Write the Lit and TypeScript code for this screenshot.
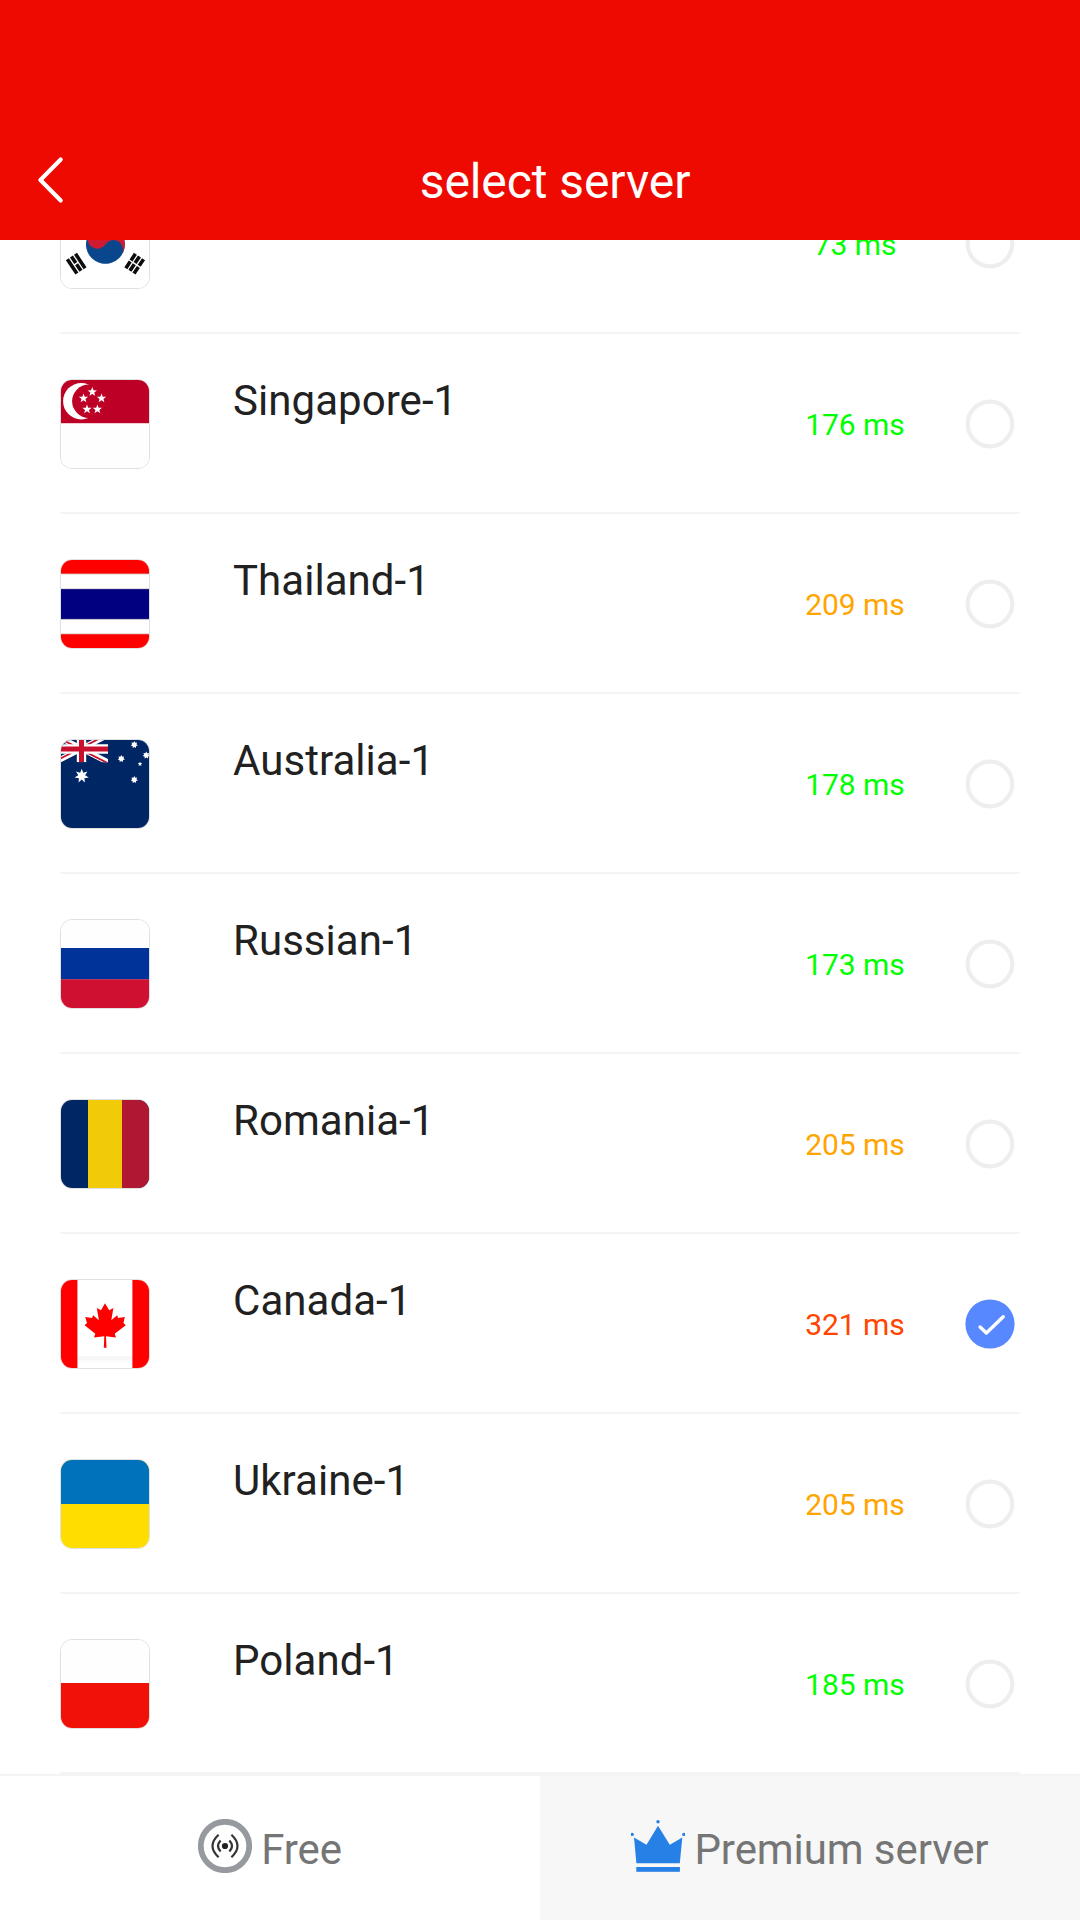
import { LitElement, html, svg, css, nothing, TemplateResult, SVGTemplateResult } from "lit";
import { customElement, property, state } from "lit/decorators.js";
import { classMap } from "lit/directives/class-map.js";

function star(cx: number, cy: number, r: number, points: number, ratio: number): string {
  const out: string[] = [];
  for (let i = 0; i < points * 2; i++) {
    const rad = i % 2 === 0 ? r : r * ratio;
    const a = -Math.PI / 2 + (Math.PI * i) / points;
    out.push(`${(cx + rad * Math.cos(a)).toFixed(2)},${(cy + rad * Math.sin(a)).toFixed(2)}`);
  }
  return out.join(" ");
}

const stars = (list: number[][], points: number, ratio: number) =>
  list.map(([x, y, r]) => svg`<polygon points=${star(x, y, r, points, ratio)} fill="#fff"/>`);

const FLAGS: Record<string, SVGTemplateResult> = {
  kr: svg`
    <rect width="90" height="90" fill="#fff"/>
    <g transform="translate(45.4 45.4) rotate(33.7)">
      <circle r="19.4" fill="#0a468c"/>
      <path d="M-19.4 0A19.4 19.4 0 0 1 19.4 0A9.7 9.7 0 0 0 0 0A9.7 9.7 0 0 1 -19.4 0Z" fill="#d01a32"/>
    </g>
    <g stroke="#0c0c0c" stroke-width="3.6">
      <path transform="translate(16.2 64.7) rotate(56.3)" d="M-8.6 -4.9H8.6M-8.6 0H-.7M.7 0H8.6M-8.6 4.9H8.6"/>
      <path transform="translate(74.7 64.7) rotate(-56.3)" d="M-8.6 -4.9H-.7M.7 -4.9H8.6M-8.6 0H-.7M.7 0H8.6M-8.6 4.9H-.7M.7 4.9H8.6"/>
    </g>`,
  sg: svg`
    <rect width="90" height="90" fill="#fefefe"/>
    <rect width="90" height="44.2" fill="#bd0026"/>
    <circle cx="21.3" cy="22.2" r="18.2" fill="#fff"/>
    <circle cx="28.8" cy="22.2" r="16.7" fill="#bd0026"/>
    ${stars([[32.3, 12.9, 4.9], [23.5, 19.3, 4.9], [41.5, 19.3, 4.9], [27, 30.3, 4.9], [37.4, 30.3, 4.9]], 5, 0.42)}`,
  th: svg`
    <rect width="90" height="90" fill="#fff"/>
    <rect width="90" height="15" fill="#f00"/>
    <rect y="30" width="90" height="30.3" fill="#000080"/>
    <rect y="75" width="90" height="15" fill="#f00"/>
    <path d="M0 15H90M0 29.7H90M0 60.4H90M0 74.8H90" stroke="#cfc6c9" stroke-width=".8"/>`,
  au: svg`
    <rect width="90" height="90" fill="#002664"/>
    <svg x="-5" y="-4" width="53" height="27.2" viewBox="0 0 53 27.2" overflow="hidden">
      <path d="M0 0L53 27.2M53 0L0 27.2" stroke="#fff" stroke-width="5.6"/>
      <path d="M0 1L26 14.4M53 -1L27 12.6M53 28.3L27 15M0 26.4L26 13" stroke="#c8102e" stroke-width="1.8"/>
      <path d="M26.5 0V27.2M0 14H53" stroke="#fff" stroke-width="9.4"/>
      <path d="M26.5 0V27.2M0 14H53" stroke="#c8102e" stroke-width="5"/>
    </svg>
    ${stars([[21.7, 37, 7.3]], 7, 0.48)}
    ${stars([[61.3, 19.7, 3.7], [74.3, 5.7, 3.7], [86.3, 16.2, 3.7], [74.3, 40.7, 3.7]], 7, 0.6)}
    ${stars([[80, 25, 2.3]], 5, 0.5)}`,
  ru: svg`
    <rect width="90" height="90" fill="#fefefe"/>
    <rect y="29" width="90" height="31.5" fill="#003399"/>
    <rect y="60.3" width="90" height="30" fill="#d01031"/>`,
  ro: svg`
    <rect width="90" height="90" fill="#002763"/>
    <rect x="28" width="34.2" height="90" fill="#f1cb07"/>
    <rect x="62" width="28" height="90" fill="#af1733"/>`,
  ca: svg`
    <rect width="90" height="90" fill="#fff"/>
    <rect y="77" width="90" height="4" fill="#f7f7f7"/>
    <rect y="81" width="90" height="3" fill="#fcfcfc"/>
    <rect width="17.4" height="90" fill="#f00"/>
    <rect x="72.4" width="18" height="90" fill="#f00"/>
    <path fill="#f00" d="M45 24.2L49.2 31.3L53.4 29.1L51.3 41.2L57.1 36.3L58.2 38.9L64.8 37.9L63.5 44L65.8 46.2L54.7 54.8L56 58.5L46 57.2L46.5 68.8H43.8L44.3 57.2L34 58.5L35.3 54.8L24.6 46.2L27 44L25.2 37.9L32 38.9L33.1 36.3L38.9 41.2L36.8 29.1L41 31.3Z"/>`,
  ua: svg`
    <rect width="90" height="90" fill="#ffdd00"/>
    <rect width="90" height="45" fill="#0072bc"/>`,
  pl: svg`
    <rect width="90" height="90" fill="#fefefe"/>
    <rect y="44" width="90" height="46" fill="#f01209"/>`,
};

interface Server {
  code: string;
  name: string;
  ping: number;
}

const SERVERS: Server[] = [
  { code: "kr", name: "", ping: 73 },
  { code: "sg", name: "Singapore-1", ping: 176 },
  { code: "th", name: "Thailand-1", ping: 209 },
  { code: "au", name: "Australia-1", ping: 178 },
  { code: "ru", name: "Russian-1", ping: 173 },
  { code: "ro", name: "Romania-1", ping: 205 },
  { code: "ca", name: "Canada-1", ping: 321 },
  { code: "ua", name: "Ukraine-1", ping: 205 },
  { code: "pl", name: "Poland-1", ping: 185 },
];

@customElement("server-row")
export class ServerRow extends LitElement {
  @property({ attribute: false }) server!: Server;
  @property({ type: Boolean }) selected = false;

  static styles = css`
    :host {
      display: block;
      flex: none;
    }
    .row {
      box-sizing: border-box;
      height: 180px;
      display: flex;
      align-items: flex-start;
      border-bottom: 2px solid #f4f4f4;
    }
    .flag {
      box-sizing: border-box;
      flex: none;
      width: 90px;
      height: 90px;
      margin-top: 45px;
      border: 1px solid #e0e0e0;
      border-radius: 12px;
    }
    .flag svg,
    .radio svg {
      display: block;
    }
    .art {
      border-radius: 11px;
      overflow: hidden;
    }
    .name {
      flex: 1;
      margin: 42px 0 0 83px;
      font-size: 42px;
      line-height: 49px;
      letter-spacing: 0.05px;
      color: #212121;
      white-space: nowrap;
    }
    .ping {
      width: 140px;
      margin: 73px 40px 0 0;
      font-size: 30px;
      line-height: 36px;
      letter-spacing: -0.05px;
      text-align: center;
      white-space: nowrap;
    }
    .fast {
      color: #00ff00;
    }
    .medium {
      color: #ffa500;
    }
    .slow {
      color: #ff4500;
    }
    .radio {
      margin: 65px 5px 0 0;
    }
  `;

  render(): TemplateResult {
    const { code, name, ping } = this.server;
    return html`
      <div class="row">
        <div class="flag">
          <div class="art">
            <svg width="88" height="88" viewBox="1 1 88 88">${FLAGS[code]}</svg>
          </div>
        </div>
        <div class="name">${name || nothing}</div>
        <div class=${classMap({ ping: true, fast: ping < 200, medium: ping >= 200 && ping < 300, slow: ping >= 300 })}>${ping} ms</div>
        <div class="radio">
          <svg width="50" height="50" viewBox="0 0 50 50">
            ${this.selected
              ? svg`<circle cx="25" cy="25" r="24.6" fill="#5888ff"/>
                  <path d="M15.1 28L21.4 34L38.2 17.8" fill="none" stroke="#fff" stroke-width="3.4" stroke-linecap="round" stroke-linejoin="round"/>`
              : svg`<circle cx="25" cy="25" r="22.3" fill="none" stroke="#eee" stroke-width="4.2"/>`}
          </svg>
        </div>
      </div>
    `;
  }
}

@customElement("app-root")
export class AppRoot extends LitElement {
  @state() private selected = "ca";

  static styles = css`
    :host {
      display: flex;
      flex-direction: column;
      width: 1080px;
      height: 1920px;
      overflow: hidden;
      background: #fff;
      font-family: Roboto, "Noto Sans", sans-serif;
    }
    .header {
      box-sizing: border-box;
      flex: none;
      height: 240px;
      padding-top: 120px;
      display: flex;
      align-items: center;
      background: #ee0a00;
      color: #fff;
    }
    .back {
      flex: none;
      width: 30px;
      height: 50px;
      margin-left: 35px;
    }
    .title {
      flex: 1;
      margin: 3px 0 0 -35px;
      font-size: 48px;
      line-height: 56px;
      letter-spacing: -0.08px;
      text-align: center;
    }
    .list {
      flex: 1;
      min-height: 0;
      overflow: hidden;
      display: flex;
      flex-direction: column;
      justify-content: flex-end;
      padding: 0 60px;
    }
    .tabs {
      box-sizing: border-box;
      flex: none;
      height: 146px;
      display: grid;
      grid-template-columns: 1fr 1fr;
    }
    .tab {
      box-sizing: border-box;
      display: flex;
      justify-content: center;
      align-items: flex-start;
      gap: 9px;
      padding-top: 45px;
      font-size: 42px;
      line-height: 49px;
      letter-spacing: -0.08px;
      color: #757575;
      background: #f7f7f7;
      border-top: 2px solid #f4f4f4;
    }
    .tab.active {
      background: #fff;
    }
    .tab svg {
      display: block;
      margin-top: -2px;
    }
    .label {
      margin-top: 4px;
    }
  `;

  render(): TemplateResult {
    return html`
      <div class="header">
        <svg class="back" viewBox="0 0 30 50">
          <path d="M25.7 4.6L5.4 25L25.7 45.4" fill="none" stroke="#fff" stroke-width="4.2" stroke-linecap="round" stroke-linejoin="round"/>
        </svg>
        <div class="title">select server</div>
      </div>
      <div class="list">
        ${SERVERS.map(
          (s) => html`<server-row .server=${s} ?selected=${s.code === this.selected}
            @click=${() => (this.selected = s.code)}></server-row>`
        )}
      </div>
      <div class="tabs">
        <div class="tab active">
          <svg width="54" height="54" viewBox="0 0 54 54">
            <circle cx="27" cy="27" r="24.2" fill="#fff" stroke="#969a9e" stroke-width="5.8"/>
            <circle cx="27" cy="27" r="3.1" fill="#222"/>
            <path d="M22.6 21.5Q17.4 27 22.6 32.5M31.4 21.5Q36.6 27 31.4 32.5" fill="none" stroke="#333" stroke-width="2.2"/>
            <path d="M20.6 15.8Q8.4 27 20.6 38.2M33.4 15.8Q45.6 27 33.4 38.2" fill="none" stroke="#333" stroke-width="2.2"/>
          </svg>
          <span class="label">Free</span>
        </div>
        <div class="tab">
          <svg width="54" height="54" viewBox="0 0 54 54">
            <g fill="#2680e5">
              <path d="M3 18.4L15.5 25.8L27 6.8L38.8 25.8L51.3 18.4L48.8 44.2H5.4Z"/>
              <rect x="5.3" y="48" width="43.6" height="4.8"/>
              <circle cx="27" cy="2.7" r="1.7"/>
              <circle cx="1.2" cy="15.4" r="1.7"/>
              <circle cx="52.8" cy="15.4" r="1.7"/>
            </g>
          </svg>
          <span class="label">Premium server</span>
        </div>
      </div>
    `;
  }
}
